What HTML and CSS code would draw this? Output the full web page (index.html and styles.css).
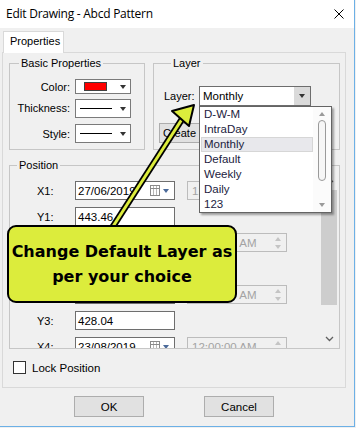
FILE: index.html
```html
<!DOCTYPE html>
<html>
<head>
<meta charset="utf-8">
<title>Edit Drawing</title>
<link rel="stylesheet" href="styles.css">
</head>
<body>
<div class="win">
  <div class="titlebar">
    <span class="title">Edit Drawing - Abcd Pattern</span>
    <svg class="close" width="10" height="10" viewBox="0 0 10 10"><path d="M0.5 0.5L9.5 9.5M9.5 0.5L0.5 9.5" stroke="#000" stroke-width="1" fill="none"/></svg>
  </div>
  <div class="content">
    <div class="tabs"><div class="tab">Properties</div></div>
    <div class="panel">
      <div class="toprow">
        <fieldset class="grp basic">
          <legend>Basic Properties</legend>
          <div class="bgrid">
            <span class="lbl">Color:</span>
            <div class="combo combo-color"><span class="swatch"></span><span class="tri"></span></div>
            <span class="lbl">Thickness:</span>
            <div class="combo"><span class="line"></span><span class="tri"></span></div>
            <span class="lbl">Style:</span>
            <div class="combo"><span class="line"></span><span class="tri"></span></div>
          </div>
        </fieldset>
        <fieldset class="grp layer">
          <legend>Layer</legend>
          <div class="layrow">
            <span class="lbl">Layer:</span>
            <div class="lcombo"><span class="ltext">Monthly</span><span class="lbtn"><span class="tri"></span></span></div>
          </div>
          <div class="btn create">Create New</div>
        </fieldset>
      </div>
      <fieldset class="grp pos">
        <legend>Position</legend>
        <div class="posinner">
          <div class="rows">
            <div class="prow"><span class="plbl">X1:</span>
              <div class="date"><span class="dval">27/06/2019</span><span class="cal"></span><span class="dtri"></span></div>
              <div class="time"><span>12:00:00 AM</span><span class="spin"><i class="up"></i><i class="dn"></i></span></div>
            </div>
            <div class="prow"><span class="plbl">Y1:</span><div class="tbox">443.46</div></div>
            <div class="prow"><span class="plbl">X2:</span>
              <div class="date"><span class="dval">15/07/2019</span><span class="cal"></span><span class="dtri"></span></div>
              <div class="time"><span>12:00:00 AM</span><span class="spin"><i class="up"></i><i class="dn"></i></span></div>
            </div>
            <div class="prow"><span class="plbl">Y2:</span><div class="tbox">452.10</div></div>
            <div class="prow"><span class="plbl">X3:</span>
              <div class="date"><span class="dval">02/08/2019</span><span class="cal"></span><span class="dtri"></span></div>
              <div class="time"><span>12:00:00 AM</span><span class="spin"><i class="up"></i><i class="dn"></i></span></div>
            </div>
            <div class="prow"><span class="plbl">Y3:</span><div class="tbox">428.04</div></div>
            <div class="prow"><span class="plbl">X4:</span>
              <div class="date"><span class="dval">23/08/2019</span><span class="cal"></span><span class="dtri"></span></div>
              <div class="time"><span>12:00:00 AM</span><span class="spin"><i class="up"></i><i class="dn"></i></span></div>
            </div>
          </div>
          <div class="vscroll">
            <div class="sarrow"><svg width="9" height="6" viewBox="0 0 9 6"><path d="M1 5L4.5 1.5L8 5" stroke="#606060" stroke-width="1.3" fill="none"/></svg></div>
            <div class="sthumb"></div>
            <div class="sspace"></div>
            <div class="sarrow"><svg width="9" height="6" viewBox="0 0 9 6"><path d="M1 1L4.5 4.5L8 1" stroke="#606060" stroke-width="1.3" fill="none"/></svg></div>
          </div>
        </div>
      </fieldset>
      <label class="chk"><span class="box"></span><span>Lock Position</span></label>
    </div>
    <div class="btns"><div class="btn dbtn">OK</div><div class="btn dbtn">Cancel</div></div>
  </div>

  <div class="dropdown">
    <div class="items">
      <div class="item">D-W-M</div>
      <div class="item">IntraDay</div>
      <div class="item sel">Monthly</div>
      <div class="item">Default</div>
      <div class="item">Weekly</div>
      <div class="item">Daily</div>
      <div class="item">123</div>
    </div>
    <div class="lscroll">
      <span class="ltri up"></span>
      <span class="lthumb"></span>
      <span class="lspace"></span>
      <span class="ltri dn"></span>
    </div>
  </div>

  <svg class="arrow" width="356" height="428" viewBox="0 0 356 428">
    <line x1="112" y1="228" x2="184" y2="116" stroke="#000" stroke-width="6.5"/>
    <line x1="112" y1="228" x2="184" y2="116" stroke="#dcec3c" stroke-width="3"/>
    <polygon points="194,105 172,111 189,126" fill="#dcec3c" stroke="#000" stroke-width="2" stroke-linejoin="round"/>
  </svg>

  <div class="callout">Change Default Layer as<br>per your choice</div>
</div>
</body>
</html>
```

FILE: styles.css
```css
* { box-sizing: border-box; }
html, body { margin: 0; padding: 0; }
body {
  width: 356px;
  height: 428px;
  overflow: hidden;
  background: #f0f0f0;
  font-family: "Liberation Sans", Arial, sans-serif;
  font-size: 11px;
  color: #000;
}
.win {
  position: relative;
  width: 355px;
  height: 427px;
  background: #f0f0f0;
  border-right: 1px solid #6cb0e6;
  border-bottom: 1px solid #6cb0e6;
}
.titlebar {
  height: 28px;
  background: #fff;
  display: flex;
  align-items: center;
  justify-content: space-between;
  padding: 0 10px 1px 6px;
}
.title {
  font-family: "Open Sans", "Noto Sans", sans-serif;
  font-size: 12px;
  letter-spacing: -0.25px;
  color: #000;
}
.content { padding: 3px 0 0 2px; }
.tabs { display: flex; height: 21px; padding-left: 1px; }
.tab {
  position: relative;
  z-index: 1;
  width: 61px;
  height: 22px;
  background: #fff;
  border: 1px solid #d9d9d9;
  border-bottom: none;
  padding: 3px 0 0 6px;
  font-size: 11px;
}
.panel {
  width: 344px;
  height: 336px;
  border: 1px solid #d9d9d9;
  padding: 4px 0 0 0;
}
.toprow { display: flex; gap: 8px; padding-left: 6px; }
.grp {
  margin: 0;
  border: 1px solid #c6c6c6;
  min-width: 0;
}
.grp legend {
  padding: 0 2px;
  margin-left: 7px;
  line-height: 12px;
  font-size: 11px;
}
.basic { width: 136px; height: 93px; padding: 10px 0 0 2px; }
.bgrid {
  display: grid;
  grid-template-columns: 58px 56px;
  grid-template-rows: 15px 20px 19px;
  column-gap: 5px;
  row-gap: 5px;
  align-items: start;
}
.lbl { text-align: right; align-self: center; white-space: nowrap; }
.bgrid .lbl:nth-of-type(2) { align-self: start; line-height: 19px; }
.combo {
  position: relative;
  height: 19px;
  background: #fff;
  border: 1px solid #7a7a7a;
  display: flex;
  align-items: center;
  padding-left: 4px;
}
.combo-color { height: 15px; padding-left: 8px; }
.swatch { width: 23px; height: 9px; background: #f00; border: 1px solid #404040; }
.line { width: 32px; height: 1px; background: #000; }
.tri {
  width: 0; height: 0;
  border-left: 3.5px solid transparent;
  border-right: 3.5px solid transparent;
  border-top: 4px solid #333;
}
.combo .tri { margin-left: auto; margin-right: 4px; }
.layer { width: 187px; height: 93px; padding: 17px 0 0 10px; }
.layrow { display: flex; align-items: center; gap: 5px; height: 20px; }
.layrow .lbl { width: 30px; }
.lcombo {
  width: 112px;
  height: 20px;
  background: #fff;
  border: 1px solid #6d6d6d;
  display: flex;
  align-items: stretch;
}
.ltext { flex: 1; padding: 3px 0 0 3px; font-size: 11.5px; }
.lbtn { width: 16px; background: #dadada; display: flex; align-items: center; justify-content: center; }
.btn {
  height: 20px;
  border: 1px solid #adadad;
  background: #e1e1e1;
  display: flex;
  align-items: center;
  justify-content: center;
}
.create { width: 80px; margin: 17px 0 0 -5px; justify-content: flex-start; padding-left: 3px; }
.pos { width: 331px; height: 190px; margin: 9px 0 0 6px; padding: 0; }
.posinner { display: flex; height: 177px; overflow: hidden; }
.rows { flex: 1; padding: 10px 0 0 27px; overflow: hidden; }
.prow { display: flex; align-items: center; height: 19px; margin-bottom: 7px; }
.plbl { width: 38px; }
.date, .tbox {
  width: 100px;
  height: 19px;
  border: 1px solid #6e6e6e;
  background: #fff;
  display: flex;
  align-items: center;
  padding-left: 2px;
  font-size: 11.5px;
}
.dval { flex: 1; }
.cal {
  width: 10px; height: 11px;
  border: 1px solid #8a8a8a;
  background:
    linear-gradient(#8a8a8a, #8a8a8a) 0 2px / 100% 1px no-repeat,
    repeating-linear-gradient(90deg, #fff 0 2px, #b8b8b8 2px 3px),
    #fff;
  margin-right: 3px;
}
.dtri {
  width: 0; height: 0;
  border-left: 3.5px solid transparent;
  border-right: 3.5px solid transparent;
  border-top: 4px solid #4b6a9a;
  margin-right: 5px;
}
.time {
  width: 100px;
  height: 19px;
  margin-left: 12px;
  border: 1px solid #bcbcbc;
  background: #f0f0f0;
  color: #a3a3a3;
  display: flex;
  align-items: center;
  padding-left: 4px;
  font-size: 11.5px;
}
.time span:first-child { flex: 1; }
.spin { display: flex; flex-direction: column; gap: 4px; margin-right: 5px; }
.spin i {
  display: block; width: 0; height: 0;
  border-left: 3.5px solid transparent;
  border-right: 3.5px solid transparent;
}
.spin .up { border-bottom: 4px solid #c4c4c4; }
.spin .dn { border-top: 4px solid #c4c4c4; }
.vscroll {
  width: 16px;
  margin-right: 2px;
  display: flex;
  flex-direction: column;
  background: #f0f0f0;
}
.sarrow { height: 18px; display: flex; align-items: center; justify-content: center; }
.sthumb { height: 115px; margin-top: 1px; background: #cdcdcd; }
.sspace { flex: 1; }
.chk {
  display: flex;
  align-items: center;
  gap: 6px;
  margin: 12px 0 0 10px;
  height: 13px;
  font-size: 11.5px;
}
.chk .box { width: 13px; height: 13px; border: 1px solid #333; background: #fff; }
.btns { display: flex; gap: 60px; padding: 8px 0 0 72px; }
.dbtn { width: 70px; height: 21px; font-size: 11.5px; }
.dropdown {
  position: absolute;
  left: 199px;
  top: 106px;
  width: 133px;
  height: 107px;
  background: #fff;
  border: 1px solid #646464;
  box-shadow: 2px 2px 2px rgba(0,0,0,0.35);
  display: flex;
  color: #1c1c40;
  font-size: 11.5px;
}
.items { flex: 1; padding: 0 0 0 1px; }
.item { height: 15px; line-height: 15px; padding-left: 3px; }
.item.sel { background: #e8e8ec; outline: 1px solid #d6d6d6; outline-offset: -1px; }
.lscroll {
  width: 18px;
  display: flex;
  flex-direction: column;
  align-items: center;
  padding: 5px 0 5px 0;
  background: #fbfbfb;
}
.ltri { width: 0; height: 0; border-left: 3.5px solid transparent; border-right: 3.5px solid transparent; }
.ltri.up { border-bottom: 4px solid #9a9a9a; }
.ltri.dn { border-top: 4px solid #9a9a9a; }
.lthumb {
  width: 8px;
  height: 61px;
  margin-top: 4px;
  border: 1px solid #9a9a9a;
  border-radius: 4px;
  background: #f6f6f6;
}
.lspace { flex: 1; }
.arrow { position: absolute; left: 0; top: 0; pointer-events: none; }
.callout {
  position: absolute;
  left: 7px;
  top: 225px;
  width: 230px;
  height: 78px;
  background: #dcec3c;
  border: 2px solid #000;
  border-radius: 9px;
  text-align: center;
  padding-top: 12px;
  font-family: "DejaVu Sans", sans-serif;
  font-weight: bold;
  font-size: 16px;
  line-height: 25px;
  color: #000;
}
```
